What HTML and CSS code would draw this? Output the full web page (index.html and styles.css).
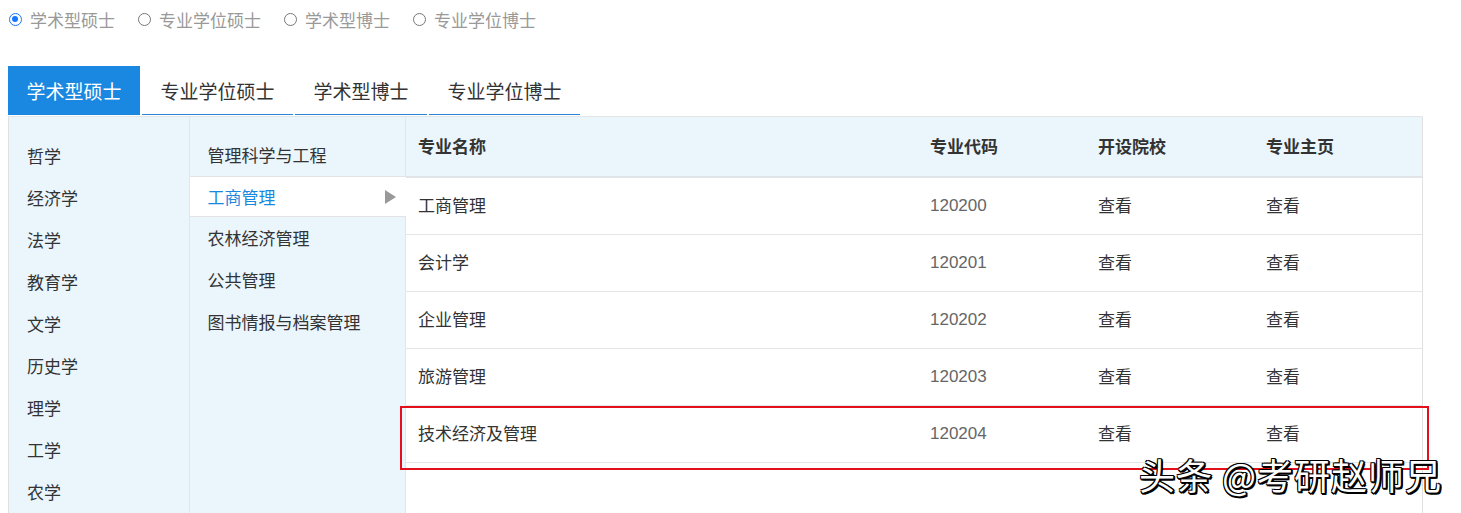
FILE: index.html
```html
<!DOCTYPE html>
<html lang="zh">
<head>
<meta charset="utf-8">
<title>专业目录</title>
<link rel="stylesheet" href="styles.css">
</head>
<body>
<div class="radios">
  <label class="radio"><span class="dot checked"></span>学术型硕士</label>
  <label class="radio"><span class="dot"></span>专业学位硕士</label>
  <label class="radio"><span class="dot"></span>学术型博士</label>
  <label class="radio"><span class="dot"></span>专业学位博士</label>
</div>

<div class="tabs">
  <div class="tab active">学术型硕士</div>
  <div class="tab">专业学位硕士</div>
  <div class="tab">学术型博士</div>
  <div class="tab">专业学位博士</div>
</div>

<div class="panel">
  <ul class="col col-cat">
    <li>哲学</li>
    <li>经济学</li>
    <li>法学</li>
    <li>教育学</li>
    <li>文学</li>
    <li>历史学</li>
    <li>理学</li>
    <li>工学</li>
    <li>农学</li>
  </ul>
  <ul class="col col-sub">
    <li>管理科学与工程</li>
    <li class="active">工商管理<span class="arrow"></span></li>
    <li>农林经济管理</li>
    <li>公共管理</li>
    <li>图书情报与档案管理</li>
  </ul>
  <div class="table">
    <div class="row head">
      <div class="c name">专业名称</div>
      <div class="c code">专业代码</div>
      <div class="c">开设院校</div>
      <div class="c">专业主页</div>
    </div>
    <div class="row">
      <div class="c name">工商管理</div>
      <div class="c code num">120200</div>
      <div class="c">查看</div>
      <div class="c">查看</div>
    </div>
    <div class="row">
      <div class="c name">会计学</div>
      <div class="c code num">120201</div>
      <div class="c">查看</div>
      <div class="c">查看</div>
    </div>
    <div class="row">
      <div class="c name">企业管理</div>
      <div class="c code num">120202</div>
      <div class="c">查看</div>
      <div class="c">查看</div>
    </div>
    <div class="row">
      <div class="c name">旅游管理</div>
      <div class="c code num">120203</div>
      <div class="c">查看</div>
      <div class="c">查看</div>
    </div>
    <div class="row">
      <div class="c name">技术经济及管理</div>
      <div class="c code num">120204</div>
      <div class="c">查看</div>
      <div class="c">查看</div>
    </div>
  </div>
</div>

<div class="highlight"></div>
<div class="watermark">头条 @考研赵师兄</div>
</body>
</html>
```

FILE: styles.css
```css
* { box-sizing: border-box; }
html, body { margin: 0; padding: 0; background: #fff; }
body {
  font-family: "Noto Sans CJK SC", "Noto Sans", sans-serif;
  color: #333;
  width: 1461px;
  height: 513px;
  overflow: hidden;
  position: relative;
}

.radios {
  display: flex;
  align-items: center;
  height: 38px;
  padding-left: 9px;
}
.radio {
  display: flex;
  align-items: center;
  font-size: 17px;
  color: #999;
  margin-right: 23px;
  line-height: 1;
}
.dot {
  width: 13px;
  height: 13px;
  border-radius: 50%;
  border: 1.5px solid #777;
  margin-right: 8px;
  position: relative;
}
.dot.checked { border-color: #1677ff; }
.dot.checked::after {
  content: "";
  position: absolute;
  left: 2px; top: 2px;
  width: 6px; height: 6px;
  border-radius: 50%;
  background: #1677ff;
}

.tabs {
  display: flex;
  margin: 28px 0 0 8px;
  height: 49px;
}
.tab {
  height: 49px;
  padding: 0 18.5px;
  font-size: 19px;
  line-height: 49px;
  color: #333;
  margin-right: 2px;
  border-bottom: 1.5px solid #2b85d8;
}
.tab.active {
  background: #1a88e0;
  color: #fff;
  border-bottom: none;
}

.panel {
  display: flex;
  margin: 1px 0 0 8px;
  width: 1415px;
  height: 400px;
  border-left: 1px solid #e0e0e0;
  border-top: 1px solid #e3e6e9;
}
.col {
  list-style: none;
  margin: 0;
  padding: 18px 0 0 0;
  background: #eaf5fc;
  font-size: 17px;
}
.col li {
  height: 42px;
  line-height: 42px;
  position: relative;
}
.col-cat {
  width: 181px;
  border-right: 1px solid #e1e6ea;
}
.col-cat li { padding-left: 18px; }
.col-sub {
  width: 217px;
  border-right: 1px solid #e1e6ea;
  padding-top: 17px;
}
.col-sub li { padding-left: 18px; height: 41.7px; line-height: 41px; }
.col-sub li.active {
  background: #fff;
  color: #1a88e0;
  border-top: 1px solid #e3e3e3;
  border-bottom: 1px solid #e3e3e3;
  line-height: 39px;
  margin-right: -1px;
}
.arrow {
  position: absolute;
  right: 10px;
  top: 13px;
  width: 0; height: 0;
  border-top: 7px solid transparent;
  border-bottom: 7px solid transparent;
  border-left: 11px solid #999;
}

.table {
  flex: 1;
  border-right: 1px solid #e0e0e0;
  font-size: 17px;
}
.row {
  display: flex;
  height: 57px;
  align-items: center;
  border-bottom: 1px solid #e5e5e5;
  padding-bottom: 3px;
}
.row.head {
  background: #eaf5fc;
  height: 61px;
  border-bottom: 2px solid #e0e4e7;
  font-weight: bold;
  padding-bottom: 3px;
}
.c {
  width: 168px;
  padding-left: 12px;
}
.c.name { width: 512px; }
.num {
  color: #666;
  font-family: "Liberation Sans", Arial, sans-serif;
  font-size: 17px;
  position: relative;
  top: 1px;
}

.highlight {
  position: absolute;
  left: 400px;
  top: 406px;
  width: 1029px;
  height: 64px;
  border: 2px solid #e3101c;
}
.watermark {
  position: absolute;
  left: 1139px;
  top: 450px;
  font-size: 36px;
  line-height: 48px;
  color: #fff;
  letter-spacing: 1px;
  white-space: nowrap;
  text-shadow:
    -1px -1px 0 #000, 1px -1px 0 #000, -1px 1px 0 #000, 1px 1px 0 #000,
    2px 2px 0 #000, 0 2px 0 #000, 2px 0 0 #000;
}
```
